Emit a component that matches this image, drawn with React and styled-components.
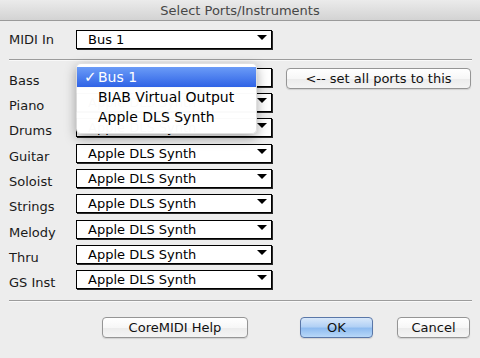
import React from "react";
import styled, { createGlobalStyle } from "styled-components";

const Global = createGlobalStyle`
  html, body { margin: 0; padding: 0; }
  body {
    background: #ededed;
    font-family: "DejaVu Sans", "Liberation Sans", sans-serif;
    font-size: 13px;
    color: #111;
  }
`;

const Window = styled.div`
  width: 480px;
  height: 358px;
  overflow: hidden;
  background: #ededed;
  display: flex;
  flex-direction: column;
`;

const TitleBar = styled.div`
  height: 20px;
  flex: none;
  background: linear-gradient(#ebebeb, #d3d3d3);
  border-bottom: 1px solid #9a9a9a;
  display: flex;
  align-items: center;
  justify-content: center;
  color: #474747;
  font-size: 13px;
`;

const Content = styled.div`
  flex: none;
  padding: 9px 8px 0 9px;
  display: flex;
  flex-direction: column;
`;

const Divider = styled.div`
  flex: none;
  height: 1px;
  background: #9c9c9c;
  box-shadow: 0 1px 0 #f9f9f9;
  margin: ${(p) => p.$m};
`;

const Rows = styled.div`
  flex: none;
  display: grid;
  grid-template-rows: 25px 25px 26px 25px 25px 26px 25px 25px 26px;
`;

const Row = styled.div`
  display: flex;
  align-items: center;
  height: ${(p) => (p.$h ? `${p.$h}px` : "auto")};
  position: relative;
`;

const Label = styled.div`
  width: 67px;
  flex: none;
  color: #1a1a1a;
  padding-bottom: 1px;
`;

const SelectWrap = styled.div`
  position: relative;
  flex: none;
  align-self: flex-start;
`;

const SelectBox = styled.div`
  box-sizing: border-box;
  width: 196px;
  height: 19px;
  background: #fff;
  border: 1px solid #000;
  box-shadow: 1px 1px 0 #2a2a2a;
  padding-left: 11px;
  display: flex;
  align-items: center;
  color: #000;
  position: relative;
  white-space: nowrap;
`;

const Arrow = styled.span`
  position: absolute;
  right: 4px;
  top: 4px;
  width: 0;
  height: 0;
  border-left: 5px solid transparent;
  border-right: 5px solid transparent;
  border-top: 5px solid #000;
`;

const PushButton = styled.button`
  box-sizing: border-box;
  font-family: "DejaVu Sans", "Liberation Sans", sans-serif;
  font-size: 13px;
  color: #111;
  height: 21px;
  width: ${(p) => p.$w}px;
  margin-left: ${(p) => p.$ml || 0}px;
  padding: 0 0 1px;
  border-radius: 4px;
  border: 1px solid ${(p) => (p.$primary ? "#5a77a8" : "#959595")};
  background: ${(p) =>
    p.$primary
      ? "linear-gradient(#d9e8fa 0%, #b2d1f5 45%, #8fbcf0 55%, #b8d8f8 100%)"
      : "linear-gradient(#ffffff 0%, #f7f7f7 50%, #ececec 55%, #f4f4f4 100%)"};
  box-shadow: 0 1px 1px rgba(0, 0, 0, 0.12);
  flex: none;
  display: flex;
  align-items: center;
  justify-content: center;
`;

const Menu = styled.div`
  position: absolute;
  left: 0;
  top: -5px;
  width: 181px;
  box-sizing: border-box;
  padding: 3px 0 6px;
  background: rgba(255, 255, 255, 0.98);
  border-radius: 5px;
  border: 1px solid rgba(0, 0, 0, 0.12);
  box-shadow: 0 4px 12px rgba(0, 0, 0, 0.35);
  z-index: 10;
  font-size: 14px;
`;

const MenuItem = styled.div`
  height: 20px;
  display: flex;
  align-items: center;
  color: ${(p) => (p.$active ? "#fff" : "#000")};
  background: ${(p) =>
    p.$active ? "linear-gradient(#6b9cf7, #2f63e6)" : "transparent"};
  white-space: nowrap;
`;

const Check = styled.span`
  width: 14px;
  padding-left: 7px;
  flex: none;
  font-size: 15px;
  font-weight: bold;
`;

const SideButton = styled(PushButton)`
  margin-left: 14px;
  align-self: flex-start;
`;

const ButtonRow = styled.div`
  flex: none;
  display: flex;
  align-items: center;
`;

const Select = ({ value, open }) => (
  <SelectBox>
    {value}
    {!open && <Arrow />}
  </SelectBox>
);

const instruments = [
  "Bass",
  "Piano",
  "Drums",
  "Guitar",
  "Soloist",
  "Strings",
  "Melody",
  "Thru",
  "GS Inst",
];

export default function App() {
  return (
    <>
      <Global />
      <Window>
        <TitleBar>Select Ports/Instruments</TitleBar>
        <Content>
          <Row $h={20}>
            <Label>MIDI In</Label>
            <SelectWrap>
              <Select value="Bus 1" />
            </SelectWrap>
          </Row>
          <Divider $m="9px 0 8px 0" />
          <Rows>
            {instruments.map((name, i) => (
              <Row key={name}>
                <Label>{name}</Label>
                <SelectWrap>
                  {i === 0 ? (
                    <>
                      <Select value="Bus 1" open />
                      <Menu>
                        <MenuItem $active>
                          <Check>✓</Check>Bus 1
                        </MenuItem>
                        <MenuItem>
                          <Check />BIAB Virtual Output
                        </MenuItem>
                        <MenuItem>
                          <Check />Apple DLS Synth
                        </MenuItem>
                      </Menu>
                    </>
                  ) : (
                    <Select value="Apple DLS Synth" />
                  )}
                </SelectWrap>
                {i === 0 && (
                  <SideButton $w={185}>&lt;-- set all ports to this</SideButton>
                )}
              </Row>
            ))}
          </Rows>
          <Divider $m="4px 0 16px 0" />
          <ButtonRow>
            <PushButton $w={146} $ml={93}>
              CoreMIDI Help
            </PushButton>
            <PushButton $w={73} $ml={52} $primary>
              OK
            </PushButton>
            <PushButton $w={73} $ml={24}>
              Cancel
            </PushButton>
          </ButtonRow>
        </Content>
      </Window>
    </>
  );
}
